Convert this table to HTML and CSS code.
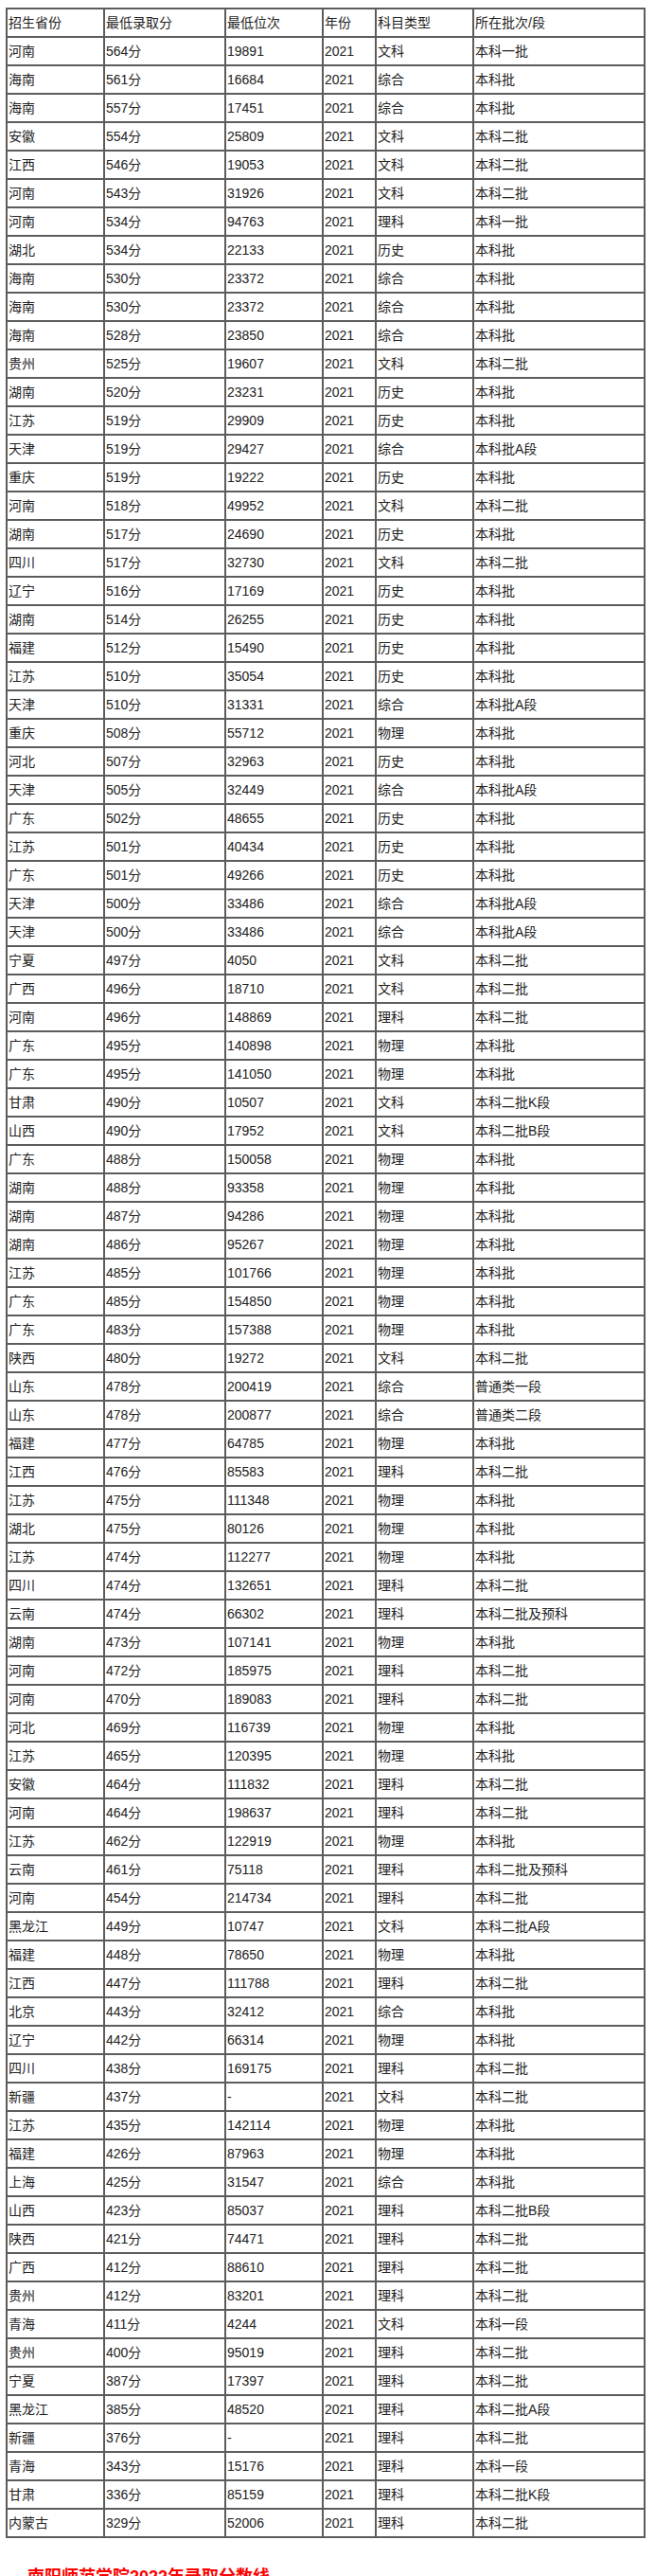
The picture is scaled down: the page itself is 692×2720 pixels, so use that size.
FILE: index.html
```html
<!DOCTYPE html>
<html lang="zh-CN">
<head>
<meta charset="utf-8">
<title>录取分数线</title>
<link rel="stylesheet" href="styles.css">
</head>
<body>
<div class="page">
<table class="scores">
<tr><td class="c1">招生省份</td><td class="c2">最低录取分</td><td class="c3">最低位次</td><td class="c4">年份</td><td class="c5">科目类型</td><td class="c6">所在批次/段</td></tr>
<tr><td>河南</td><td>564分</td><td>19891</td><td>2021</td><td>文科</td><td>本科一批</td></tr>
<tr><td>海南</td><td>561分</td><td>16684</td><td>2021</td><td>综合</td><td>本科批</td></tr>
<tr><td>海南</td><td>557分</td><td>17451</td><td>2021</td><td>综合</td><td>本科批</td></tr>
<tr><td>安徽</td><td>554分</td><td>25809</td><td>2021</td><td>文科</td><td>本科二批</td></tr>
<tr><td>江西</td><td>546分</td><td>19053</td><td>2021</td><td>文科</td><td>本科二批</td></tr>
<tr><td>河南</td><td>543分</td><td>31926</td><td>2021</td><td>文科</td><td>本科二批</td></tr>
<tr><td>河南</td><td>534分</td><td>94763</td><td>2021</td><td>理科</td><td>本科一批</td></tr>
<tr><td>湖北</td><td>534分</td><td>22133</td><td>2021</td><td>历史</td><td>本科批</td></tr>
<tr><td>海南</td><td>530分</td><td>23372</td><td>2021</td><td>综合</td><td>本科批</td></tr>
<tr><td>海南</td><td>530分</td><td>23372</td><td>2021</td><td>综合</td><td>本科批</td></tr>
<tr><td>海南</td><td>528分</td><td>23850</td><td>2021</td><td>综合</td><td>本科批</td></tr>
<tr><td>贵州</td><td>525分</td><td>19607</td><td>2021</td><td>文科</td><td>本科二批</td></tr>
<tr><td>湖南</td><td>520分</td><td>23231</td><td>2021</td><td>历史</td><td>本科批</td></tr>
<tr><td>江苏</td><td>519分</td><td>29909</td><td>2021</td><td>历史</td><td>本科批</td></tr>
<tr><td>天津</td><td>519分</td><td>29427</td><td>2021</td><td>综合</td><td>本科批A段</td></tr>
<tr><td>重庆</td><td>519分</td><td>19222</td><td>2021</td><td>历史</td><td>本科批</td></tr>
<tr><td>河南</td><td>518分</td><td>49952</td><td>2021</td><td>文科</td><td>本科二批</td></tr>
<tr><td>湖南</td><td>517分</td><td>24690</td><td>2021</td><td>历史</td><td>本科批</td></tr>
<tr><td>四川</td><td>517分</td><td>32730</td><td>2021</td><td>文科</td><td>本科二批</td></tr>
<tr><td>辽宁</td><td>516分</td><td>17169</td><td>2021</td><td>历史</td><td>本科批</td></tr>
<tr><td>湖南</td><td>514分</td><td>26255</td><td>2021</td><td>历史</td><td>本科批</td></tr>
<tr><td>福建</td><td>512分</td><td>15490</td><td>2021</td><td>历史</td><td>本科批</td></tr>
<tr><td>江苏</td><td>510分</td><td>35054</td><td>2021</td><td>历史</td><td>本科批</td></tr>
<tr><td>天津</td><td>510分</td><td>31331</td><td>2021</td><td>综合</td><td>本科批A段</td></tr>
<tr><td>重庆</td><td>508分</td><td>55712</td><td>2021</td><td>物理</td><td>本科批</td></tr>
<tr><td>河北</td><td>507分</td><td>32963</td><td>2021</td><td>历史</td><td>本科批</td></tr>
<tr><td>天津</td><td>505分</td><td>32449</td><td>2021</td><td>综合</td><td>本科批A段</td></tr>
<tr><td>广东</td><td>502分</td><td>48655</td><td>2021</td><td>历史</td><td>本科批</td></tr>
<tr><td>江苏</td><td>501分</td><td>40434</td><td>2021</td><td>历史</td><td>本科批</td></tr>
<tr><td>广东</td><td>501分</td><td>49266</td><td>2021</td><td>历史</td><td>本科批</td></tr>
<tr><td>天津</td><td>500分</td><td>33486</td><td>2021</td><td>综合</td><td>本科批A段</td></tr>
<tr><td>天津</td><td>500分</td><td>33486</td><td>2021</td><td>综合</td><td>本科批A段</td></tr>
<tr><td>宁夏</td><td>497分</td><td>4050</td><td>2021</td><td>文科</td><td>本科二批</td></tr>
<tr><td>广西</td><td>496分</td><td>18710</td><td>2021</td><td>文科</td><td>本科二批</td></tr>
<tr><td>河南</td><td>496分</td><td>148869</td><td>2021</td><td>理科</td><td>本科二批</td></tr>
<tr><td>广东</td><td>495分</td><td>140898</td><td>2021</td><td>物理</td><td>本科批</td></tr>
<tr><td>广东</td><td>495分</td><td>141050</td><td>2021</td><td>物理</td><td>本科批</td></tr>
<tr><td>甘肃</td><td>490分</td><td>10507</td><td>2021</td><td>文科</td><td>本科二批K段</td></tr>
<tr><td>山西</td><td>490分</td><td>17952</td><td>2021</td><td>文科</td><td>本科二批B段</td></tr>
<tr><td>广东</td><td>488分</td><td>150058</td><td>2021</td><td>物理</td><td>本科批</td></tr>
<tr><td>湖南</td><td>488分</td><td>93358</td><td>2021</td><td>物理</td><td>本科批</td></tr>
<tr><td>湖南</td><td>487分</td><td>94286</td><td>2021</td><td>物理</td><td>本科批</td></tr>
<tr><td>湖南</td><td>486分</td><td>95267</td><td>2021</td><td>物理</td><td>本科批</td></tr>
<tr><td>江苏</td><td>485分</td><td>101766</td><td>2021</td><td>物理</td><td>本科批</td></tr>
<tr><td>广东</td><td>485分</td><td>154850</td><td>2021</td><td>物理</td><td>本科批</td></tr>
<tr><td>广东</td><td>483分</td><td>157388</td><td>2021</td><td>物理</td><td>本科批</td></tr>
<tr><td>陕西</td><td>480分</td><td>19272</td><td>2021</td><td>文科</td><td>本科二批</td></tr>
<tr><td>山东</td><td>478分</td><td>200419</td><td>2021</td><td>综合</td><td>普通类一段</td></tr>
<tr><td>山东</td><td>478分</td><td>200877</td><td>2021</td><td>综合</td><td>普通类二段</td></tr>
<tr><td>福建</td><td>477分</td><td>64785</td><td>2021</td><td>物理</td><td>本科批</td></tr>
<tr><td>江西</td><td>476分</td><td>85583</td><td>2021</td><td>理科</td><td>本科二批</td></tr>
<tr><td>江苏</td><td>475分</td><td>111348</td><td>2021</td><td>物理</td><td>本科批</td></tr>
<tr><td>湖北</td><td>475分</td><td>80126</td><td>2021</td><td>物理</td><td>本科批</td></tr>
<tr><td>江苏</td><td>474分</td><td>112277</td><td>2021</td><td>物理</td><td>本科批</td></tr>
<tr><td>四川</td><td>474分</td><td>132651</td><td>2021</td><td>理科</td><td>本科二批</td></tr>
<tr><td>云南</td><td>474分</td><td>66302</td><td>2021</td><td>理科</td><td>本科二批及预科</td></tr>
<tr><td>湖南</td><td>473分</td><td>107141</td><td>2021</td><td>物理</td><td>本科批</td></tr>
<tr><td>河南</td><td>472分</td><td>185975</td><td>2021</td><td>理科</td><td>本科二批</td></tr>
<tr><td>河南</td><td>470分</td><td>189083</td><td>2021</td><td>理科</td><td>本科二批</td></tr>
<tr><td>河北</td><td>469分</td><td>116739</td><td>2021</td><td>物理</td><td>本科批</td></tr>
<tr><td>江苏</td><td>465分</td><td>120395</td><td>2021</td><td>物理</td><td>本科批</td></tr>
<tr><td>安徽</td><td>464分</td><td>111832</td><td>2021</td><td>理科</td><td>本科二批</td></tr>
<tr><td>河南</td><td>464分</td><td>198637</td><td>2021</td><td>理科</td><td>本科二批</td></tr>
<tr><td>江苏</td><td>462分</td><td>122919</td><td>2021</td><td>物理</td><td>本科批</td></tr>
<tr><td>云南</td><td>461分</td><td>75118</td><td>2021</td><td>理科</td><td>本科二批及预科</td></tr>
<tr><td>河南</td><td>454分</td><td>214734</td><td>2021</td><td>理科</td><td>本科二批</td></tr>
<tr><td>黑龙江</td><td>449分</td><td>10747</td><td>2021</td><td>文科</td><td>本科二批A段</td></tr>
<tr><td>福建</td><td>448分</td><td>78650</td><td>2021</td><td>物理</td><td>本科批</td></tr>
<tr><td>江西</td><td>447分</td><td>111788</td><td>2021</td><td>理科</td><td>本科二批</td></tr>
<tr><td>北京</td><td>443分</td><td>32412</td><td>2021</td><td>综合</td><td>本科批</td></tr>
<tr><td>辽宁</td><td>442分</td><td>66314</td><td>2021</td><td>物理</td><td>本科批</td></tr>
<tr><td>四川</td><td>438分</td><td>169175</td><td>2021</td><td>理科</td><td>本科二批</td></tr>
<tr><td>新疆</td><td>437分</td><td>-</td><td>2021</td><td>文科</td><td>本科二批</td></tr>
<tr><td>江苏</td><td>435分</td><td>142114</td><td>2021</td><td>物理</td><td>本科批</td></tr>
<tr><td>福建</td><td>426分</td><td>87963</td><td>2021</td><td>物理</td><td>本科批</td></tr>
<tr><td>上海</td><td>425分</td><td>31547</td><td>2021</td><td>综合</td><td>本科批</td></tr>
<tr><td>山西</td><td>423分</td><td>85037</td><td>2021</td><td>理科</td><td>本科二批B段</td></tr>
<tr><td>陕西</td><td>421分</td><td>74471</td><td>2021</td><td>理科</td><td>本科二批</td></tr>
<tr><td>广西</td><td>412分</td><td>88610</td><td>2021</td><td>理科</td><td>本科二批</td></tr>
<tr><td>贵州</td><td>412分</td><td>83201</td><td>2021</td><td>理科</td><td>本科二批</td></tr>
<tr><td>青海</td><td>411分</td><td>4244</td><td>2021</td><td>文科</td><td>本科一段</td></tr>
<tr><td>贵州</td><td>400分</td><td>95019</td><td>2021</td><td>理科</td><td>本科二批</td></tr>
<tr><td>宁夏</td><td>387分</td><td>17397</td><td>2021</td><td>理科</td><td>本科二批</td></tr>
<tr><td>黑龙江</td><td>385分</td><td>48520</td><td>2021</td><td>理科</td><td>本科二批A段</td></tr>
<tr><td>新疆</td><td>376分</td><td>-</td><td>2021</td><td>理科</td><td>本科二批</td></tr>
<tr><td>青海</td><td>343分</td><td>15176</td><td>2021</td><td>理科</td><td>本科一段</td></tr>
<tr><td>甘肃</td><td>336分</td><td>85159</td><td>2021</td><td>理科</td><td>本科二批K段</td></tr>
<tr><td>内蒙古</td><td>329分</td><td>52006</td><td>2021</td><td>理科</td><td>本科二批</td></tr>
</table>
<h2 class="section-title">南阳师范学院2022年录取分数线</h2>
</div>
</body>
</html>
```

FILE: styles.css
```css
html, body {
  margin: 0;
  padding: 0;
  background: #ffffff;
}

.page {
  padding: 8px 12px 0 6px;
  font-family: "Liberation Sans", "Noto Sans CJK SC", sans-serif;
  color: #222222;
}

.scores {
  width: 674px;
  table-layout: fixed;
  border-collapse: separate;
  border-spacing: 0;
  border: 1px solid #5c5c5c;
  font-size: 14px;
}

.scores td {
  box-sizing: border-box;
  height: 30px;
  padding: 0 0 0 1px;
  border: 1px solid #5c5c5c;
  vertical-align: middle;
  white-space: nowrap;
  line-height: 18px;
}

.scores .c1 { width: 103px; }
.scores .c2 { width: 128px; }
.scores .c3 { width: 103px; }
.scores .c4 { width: 56px; }
.scores .c5 { width: 103px; }
.scores .c6 { width: 181px; }

.section-title {
  margin: 29px 0 0 23px;
  font-family: "Liberation Sans", "Noto Sans CJK SC", sans-serif;
  font-size: 18px;
  line-height: 24px;
  font-weight: bold;
  color: #ff0000;
}
```
